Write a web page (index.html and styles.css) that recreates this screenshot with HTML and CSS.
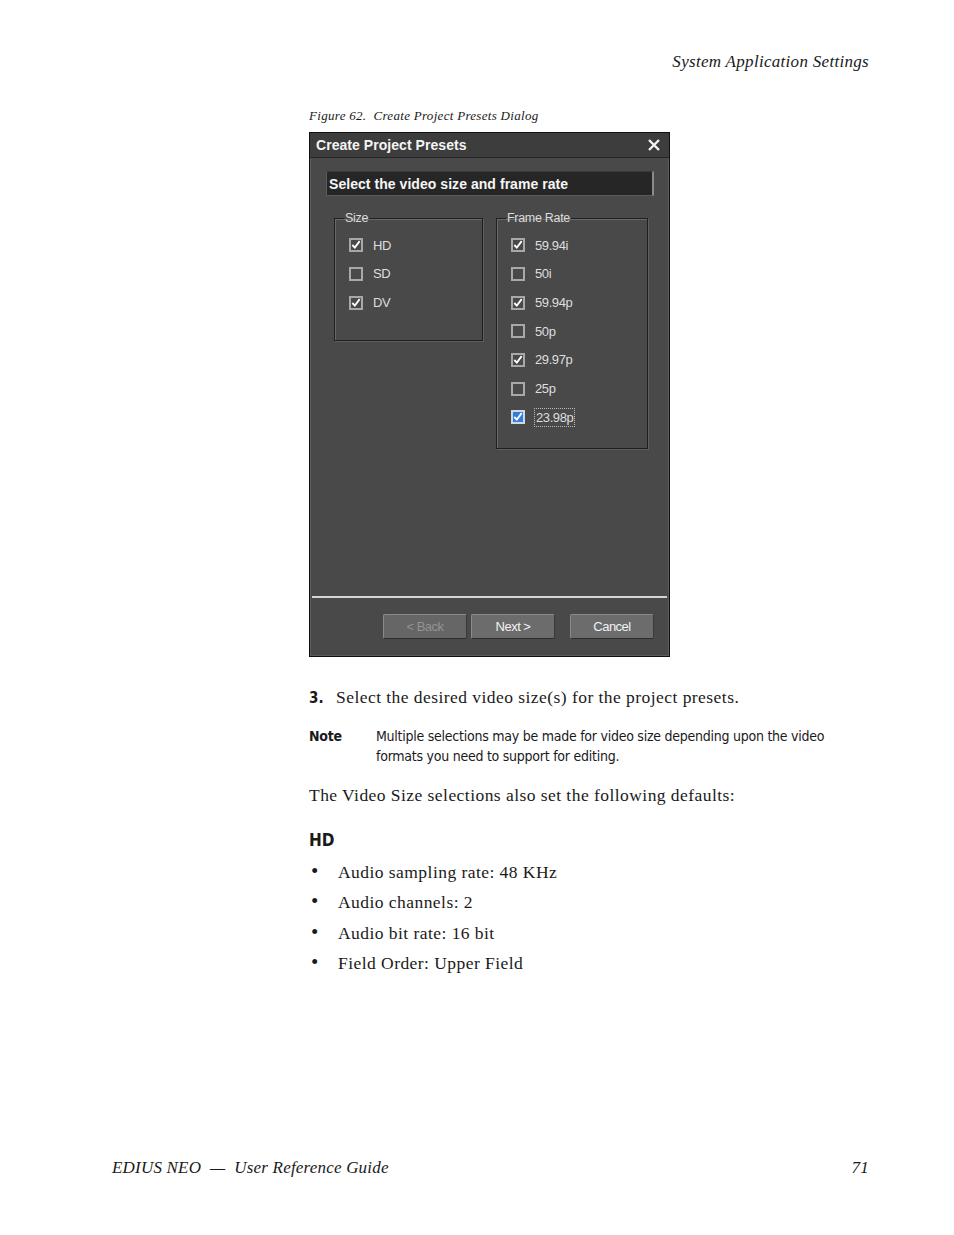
FILE: index.html
```html
<!DOCTYPE html>
<html lang="en">
<head>
    <meta charset="UTF-8">
    <meta name="viewport" content="width=device-width, initial-scale=1.0">
    <title>System Application Settings - Create Project Presets</title>
    <link rel="stylesheet" href="styles.css">
</head>
<body>
<div class="page">
    <div class="running-head">System Application Settings</div>

    <div class="content">
        <div class="caption">Figure 62.&nbsp; Create Project Presets Dialog</div>

        <div class="dialog">
            <div class="dlg-title">
                <span>Create Project Presets</span>
                <svg class="dlg-close" width="14" height="12" viewBox="0 0 14 12">
                    <path d="M2 1 L12 11 M12 1 L2 11" stroke="#f2f2f2" stroke-width="2.4" fill="none"/>
                </svg>
            </div>
            <div class="dlg-body">
                <div class="step-head">Select the video size and frame rate</div>
                <div class="groups">
                    <fieldset class="group group-size">
                        <legend>Size</legend>
                        <div class="opt"><span class="cb on"><svg width="12" height="12" viewBox="0 0 12 12"><path d="M1.6 6 L4.6 9.2 L10.4 1.4" stroke="#fff" stroke-width="2.2" fill="none"/></svg></span>HD</div>
                        <div class="opt"><span class="cb"></span>SD</div>
                        <div class="opt"><span class="cb on"><svg width="12" height="12" viewBox="0 0 12 12"><path d="M1.6 6 L4.6 9.2 L10.4 1.4" stroke="#fff" stroke-width="2.2" fill="none"/></svg></span>DV</div>
                    </fieldset>
                    <fieldset class="group group-rate">
                        <legend>Frame Rate</legend>
                        <div class="opt"><span class="cb on"><svg width="12" height="12" viewBox="0 0 12 12"><path d="M1.6 6 L4.6 9.2 L10.4 1.4" stroke="#fff" stroke-width="2.2" fill="none"/></svg></span>59.94i</div>
                        <div class="opt"><span class="cb"></span>50i</div>
                        <div class="opt"><span class="cb on"><svg width="12" height="12" viewBox="0 0 12 12"><path d="M1.6 6 L4.6 9.2 L10.4 1.4" stroke="#fff" stroke-width="2.2" fill="none"/></svg></span>59.94p</div>
                        <div class="opt"><span class="cb"></span>50p</div>
                        <div class="opt"><span class="cb on"><svg width="12" height="12" viewBox="0 0 12 12"><path d="M1.6 6 L4.6 9.2 L10.4 1.4" stroke="#fff" stroke-width="2.2" fill="none"/></svg></span>29.97p</div>
                        <div class="opt"><span class="cb"></span>25p</div>
                        <div class="opt"><span class="cb on focus"><svg width="12" height="12" viewBox="0 0 12 12"><path d="M1.6 6 L4.6 9.2 L10.4 1.4" stroke="#fff" stroke-width="2.2" fill="none"/></svg></span><span class="focus-label">23.98p</span></div>
                    </fieldset>
                </div>
            </div>
            <div class="dlg-sep"></div>
            <div class="dlg-foot">
                <button class="btn" disabled>&lt; Back</button>
                <button class="btn">Next &gt;</button>
                <button class="btn btn-cancel">Cancel</button>
            </div>
        </div>

        <p class="step"><span class="step-num">3.</span>Select the desired video size(s) for the project presets.</p>

        <div class="note">
            <div class="note-label">Note</div>
            <div class="note-text">Multiple selections may be made for video size depending upon the video formats you need to support for editing.</div>
        </div>

        <p class="body-text">The Video Size selections also set the following defaults:</p>

        <h3 class="sub-head">HD</h3>
        <ul class="bullets">
            <li>Audio sampling rate: 48 KHz</li>
            <li>Audio channels: 2</li>
            <li>Audio bit rate: 16 bit</li>
            <li>Field Order: Upper Field</li>
        </ul>
    </div>

    <div class="footer">
        <span>EDIUS NEO &nbsp;—&nbsp; User Reference Guide</span>
        <span>71</span>
    </div>
</div>
</body>
</html>
```

FILE: styles.css
```css
* {
    box-sizing: border-box;
}
body {
    margin: 0;
    background: #fff;
    color: #1a1a1a;
    font-family: 'Liberation Serif', serif;
}
.page {
    width: 954px;
    height: 1235px;
    display: flex;
    flex-direction: column;
}
.running-head {
    padding: 52px 85px 0 0;
    text-align: right;
    font-style: italic;
    font-size: 17px;
    letter-spacing: 0.3px;
    line-height: 20px;
}
.content {
    padding-left: 309px;
    padding-right: 85px;
}
.caption {
    margin-top: 36px;
    font-style: italic;
    font-size: 13px;
    letter-spacing: 0.3px;
    line-height: 16px;
}

/* dialog */
.dialog {
    margin-top: 8px;
    width: 361px;
    height: 525px;
    background: #494949;
    border: 1px solid #101010;
    box-shadow: inset 0 0 0 1px #5c5c5c;
    font-family: 'Liberation Sans', sans-serif;
    color: #e4e4e4;
}
.dlg-title {
    height: 25px;
    display: flex;
    align-items: center;
    justify-content: space-between;
    padding: 0 8px 0 6px;
    background: #3d3d3d;
    border-bottom: 1px solid #262626;
    font-weight: bold;
    font-size: 14px;
    letter-spacing: 0.05px;
    color: #f4f4f4;
}
.dlg-body {
    height: 438px;
    padding: 13px 15px 0 16px;
}
.step-head {
    height: 25px;
    background: #262626;
    border: 1px solid #5a5a5a;
    border-top-color: #3a3a3a;
    border-right: 2px solid #8a8a8a;
    padding-left: 2px;
    font-weight: bold;
    font-size: 14px;
    letter-spacing: 0.05px;
    line-height: 24px;
    color: #f6f6f6;
}
.groups {
    display: flex;
    align-items: flex-start;
    gap: 13px;
    margin-top: 15px;
    padding-left: 8px;
}
.group {
    margin: 0;
    padding: 6px 0 0 14px;
    border: 1px solid #1f1f1f;
    box-shadow: inset 1px 1px 0 #6a6a6a, 1px 1px 0 #5e5e5e;
    min-width: 0;
}
.group legend {
    padding: 0 1px;
    margin-left: -5px;
    font-size: 12.5px;
    letter-spacing: -0.3px;
    color: #dcdcdc;
}
.group-size {
    width: 149px;
    height: 130px;
}
.group-rate {
    width: 152px;
    height: 238px;
}
.opt {
    height: 28.67px;
    display: flex;
    align-items: center;
    gap: 10px;
    font-size: 13px;
    letter-spacing: -0.4px;
    color: #dedede;
}
.cb {
    width: 14px;
    height: 14px;
    border: 2px solid #a8a8a8;
    display: flex;
    align-items: center;
    justify-content: center;
}
.cb.focus {
    background: #2f7ee0;
    border-color: #cfd8e6;
}
.focus-label {
    outline: 1px dotted #bbb;
    outline-offset: 1px;
    margin-left: 1px;
}
.dlg-sep {
    height: 2px;
    margin: 0 2px;
    background: #d4d4d4;
}
.dlg-foot {
    height: 58px;
    display: flex;
    justify-content: flex-end;
    align-items: flex-start;
    padding: 16px 15px 0 0;
    gap: 4px;
}
.btn {
    width: 84px;
    height: 25px;
    background: #6c6c6c;
    border: 1px solid #8a8a8a;
    border-bottom-color: #2c2c2c;
    border-right-color: #3a3a3a;
    border-radius: 2px;
    font-family: 'Liberation Sans', sans-serif;
    font-size: 13px;
    letter-spacing: -0.5px;
    color: #f2f2f2;
    padding: 0;
}
.btn:disabled {
    color: #939393;
    background: #666;
}
.btn-cancel {
    margin-left: 11px;
}

/* text */
.step {
    margin: 29px 0 0;
    font-size: 17.5px;
    letter-spacing: 0.45px;
    line-height: 22px;
}
.step-num {
    display: inline-block;
    width: 27px;
    font-family: 'Liberation Sans Narrow', 'DejaVu Sans Condensed', sans-serif;
    font-weight: bold;
    font-size: 15px;
    letter-spacing: 0;
}
.note {
    display: flex;
    margin-top: 18px;
    font-family: 'Liberation Sans Narrow', 'DejaVu Sans Condensed', sans-serif;
    font-size: 14px;
    letter-spacing: -0.25px;
    line-height: 19.5px;
}
.note-label {
    width: 67px;
    flex: none;
    font-weight: bold;
}
.note-text {
    width: 460px;
}
.body-text {
    margin: 18px 0 0;
    font-size: 17.5px;
    letter-spacing: 0.45px;
    line-height: 22px;
}
.sub-head {
    margin: 23px 0 0;
    font-family: 'Liberation Sans Narrow', 'DejaVu Sans Condensed', sans-serif;
    font-weight: bold;
    font-size: 17px;
    line-height: 22px;
}
.bullets {
    margin: 6px 0 0;
    padding: 0;
    list-style: none;
    font-size: 17.5px;
    letter-spacing: 0.45px;
    line-height: 30.4px;
}
.bullets li {
    display: flex;
    align-items: baseline;
    height: 30.4px;
}
.bullets li::before {
    content: "•";
    width: 27px;
    padding-left: 2px;
    font-size: 21px;
    line-height: 1;
}
.footer {
    margin-top: auto;
    padding: 0 85px 57px 112px;
    display: flex;
    justify-content: space-between;
    font-style: italic;
    font-size: 17px;
    letter-spacing: 0.2px;
    line-height: 20px;
}
```
